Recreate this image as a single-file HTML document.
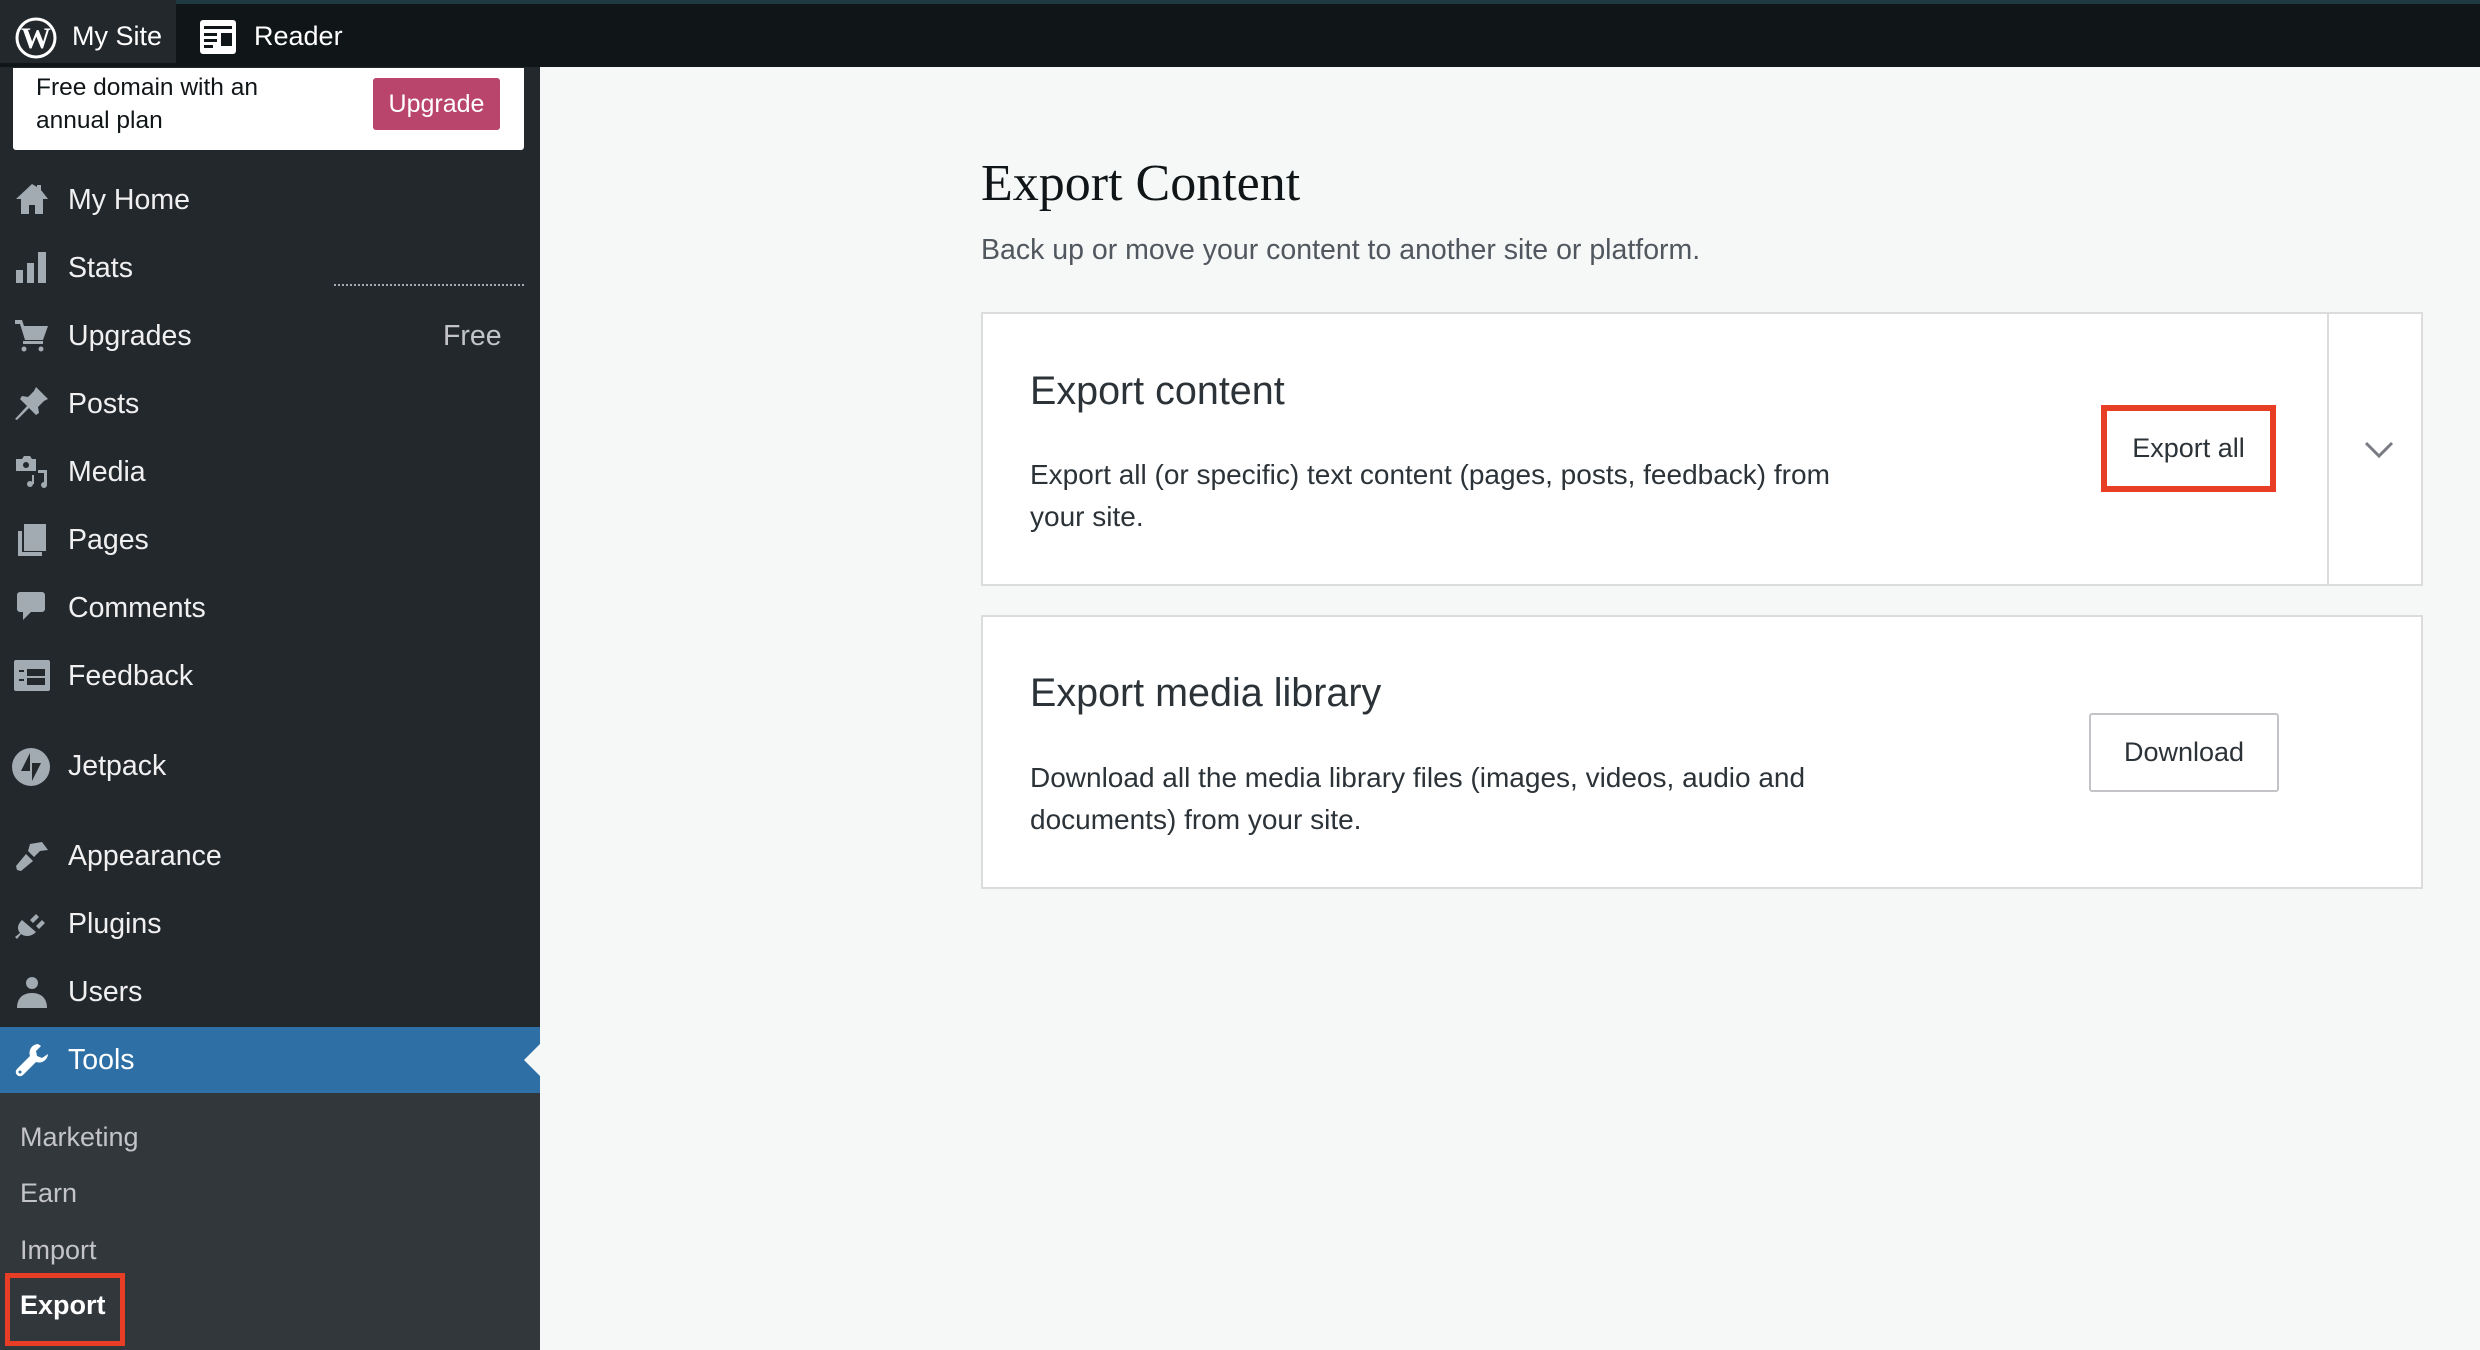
<!DOCTYPE html>
<html><head><meta charset="utf-8"><style>
*{margin:0;padding:0;box-sizing:border-box}
body{width:2480px;height:1350px;overflow:hidden;background:#f6f7f7;font-family:"Liberation Sans",sans-serif;position:relative}
.a{position:absolute}
#top{left:0;top:0;width:2480px;height:67px;background:#101517;border-top:4px solid #1c3a3f}
#mysite{left:0;top:0;width:176px;height:63px;background:#23282d}
.tt{color:#fff;font-size:27px;top:21px}
#side{left:0;top:67px;width:540px;height:1283px;background:#23282d}
#sub{left:0;top:1093px;width:540px;height:257px;background:#32373c}
.mi{position:absolute;left:68px;color:#f0f0f1;font-size:28.5px;line-height:34px}
.ic{position:absolute;left:14px;width:36px;height:36px}
.si{position:absolute;left:20px;color:#c3c4c7;font-size:27px;line-height:30px}
.card{position:absolute;left:981px;width:1442px;background:#fff;border:2px solid #dcdcde}
.ct{position:absolute;left:47px;font-size:39.5px;color:#2c3338}
.cd{position:absolute;left:47px;font-size:28px;color:#2c3338;line-height:42px;width:850px}
.btn{position:absolute;background:#fff;border:2px solid #c3c4c7;border-radius:3px;font-size:27px;color:#2c3338;display:flex;align-items:center;justify-content:center}
</style></head><body>
<div class="a" id="top"></div>
<div class="a" id="mysite"></div>
<svg class="a" style="left:15px;top:17px" width="42" height="42" viewBox="0 0 42 42"><circle cx="21" cy="21" r="19" fill="none" stroke="#fff" stroke-width="3"/><text x="21" y="31" text-anchor="middle" font-family="Liberation Serif" font-size="30" font-weight="bold" fill="#fff">W</text></svg>
<div class="a tt" style="left:72px">My Site</div>
<svg class="a" style="left:200px;top:20px" width="36" height="36" viewBox="0 0 36 36"><rect x="0" y="0" width="36" height="34" rx="3" fill="#fff"/><rect x="4" y="6" width="28" height="3" fill="#101517"/><rect x="4" y="13" width="13" height="3" fill="#101517"/><rect x="4" y="19" width="13" height="3" fill="#101517"/><rect x="4" y="25" width="9" height="3" fill="#101517"/><rect x="21" y="13" width="11" height="13" fill="#101517"/></svg>
<div class="a tt" style="left:254px">Reader</div>

<div class="a" id="side"></div>
<div class="a" id="sub"></div>
<div class="a" style="left:13px;top:68px;width:511px;height:82px;background:#fff;border-radius:0 0 3px 3px"></div>
<div class="a" style="left:36px;top:71px;font-size:24.5px;line-height:33px;color:#101517">Free domain with an<br>annual plan</div>
<div class="a" style="left:373px;top:78px;width:127px;height:52px;background:#b9456d;border-radius:3px;color:#fff;font-size:25px;display:flex;align-items:center;justify-content:center">Upgrade</div>

<div class="mi" style="top:183px">My Home</div>
<svg class="ic" style="top:181px" viewBox="0 0 36 36"><path d="M18 3L2 18h5v15h8v-9h6v9h8V18h5L27 9V4h-4v2z" fill="#a2aab2"/></svg>
<div class="mi" style="top:251px">Stats</div>
<svg class="ic" style="top:249px" viewBox="0 0 36 36"><rect x="2" y="21" width="7" height="13" fill="#a2aab2"/><rect x="13" y="14" width="7" height="20" fill="#a2aab2"/><rect x="24" y="3" width="8" height="31" fill="#a2aab2"/></svg>
<div class="a" style="left:334px;top:284px;width:190px;border-top:2px dotted #a2aab2"></div>
<div class="mi" style="top:319px">Upgrades</div>
<div class="mi" style="top:319px;left:443px;color:#c3c4c7">Free</div>
<svg class="ic" style="top:317px" viewBox="0 0 36 36"><path d="M1 3h7l2 6h24l-5 14H11L6 7H1z" fill="#a2aab2"/><rect x="9" y="24" width="20" height="3" fill="#a2aab2"/><circle cx="10" cy="32" r="2.5" fill="#a2aab2"/><circle cx="27" cy="32" r="2.5" fill="#a2aab2"/></svg>
<div class="mi" style="top:387px">Posts</div>
<svg class="ic" style="top:385px" viewBox="0 0 36 36"><path d="M22 2l12 12-4 2-6 6 1 6-3 2-7-7-12 12-2-1 12-13-7-7 2-3 6 1 6-6z" fill="#a2aab2"/></svg>
<div class="mi" style="top:455px">Media</div>
<svg class="ic" style="top:453px" viewBox="0 0 36 36"><path d="M2 6h6l2-3h6l2 3h4v12H2z" fill="#a2aab2"/><circle cx="12" cy="12" r="3" fill="#23282d"/><path d="M24 17h9v15a3 3 0 1 1-3-3v-9h-6z" fill="#a2aab2"/><circle cx="16" cy="31" r="3" fill="#a2aab2"/><rect x="18" y="22" width="2" height="9" fill="#a2aab2"/></svg>
<div class="mi" style="top:523px">Pages</div>
<svg class="ic" style="top:521px" viewBox="0 0 36 36"><path d="M4 10h4v21h20v4H4z" fill="#a2aab2"/><rect x="10" y="3" width="22" height="27" fill="#a2aab2"/></svg>
<div class="mi" style="top:591px">Comments</div>
<svg class="ic" style="top:589px" viewBox="0 0 36 36"><path d="M6 3h22a3 3 0 0 1 3 3v14a3 3 0 0 1-3 3H17l-8 8v-8H6a3 3 0 0 1-3-3V6a3 3 0 0 1 3-3z" fill="#a2aab2"/></svg>
<div class="mi" style="top:659px">Feedback</div>
<svg class="ic" style="top:657px" viewBox="0 0 36 36"><rect x="0" y="3" width="36" height="31" rx="2" fill="#a2aab2"/><rect x="5" y="13" width="5" height="2" fill="#23282d"/><rect x="5" y="22" width="5" height="2" fill="#23282d"/><rect x="13" y="12" width="18" height="7" fill="#23282d"/><rect x="13" y="21" width="18" height="7" fill="#23282d"/></svg>
<div class="mi" style="top:749px">Jetpack</div>
<svg class="ic" style="top:747px;left:11px;width:40px;height:40px" viewBox="0 0 40 40"><circle cx="20" cy="20" r="19" fill="#a2aab2"/><path d="M19 6v18h-9zM21 34V16h9z" fill="#23282d"/></svg>
<div class="mi" style="top:839px">Appearance</div>
<svg class="ic" style="top:838px" viewBox="0 0 36 36"><path d="M16 6l12-2 6 8-8 1-6 6-6-6z" fill="#a2aab2"/><path d="M12 16l7 7-12 10-4-1-1-4z" fill="#a2aab2"/></svg>
<div class="mi" style="top:907px">Plugins</div>
<svg class="ic" style="top:906px" viewBox="0 0 36 36"><path d="M8 14l14 12c-5 5-11 5-15 2l-4 5-2-2 5-4c-3-4-3-8 2-13z" fill="#a2aab2"/><path d="M16 14l6-6 3 3-6 6zM22 20l6-6 3 3-6 6z" fill="#a2aab2"/></svg>
<div class="mi" style="top:975px">Users</div>
<svg class="ic" style="top:974px" viewBox="0 0 36 36"><circle cx="18" cy="9" r="6" fill="#a2aab2"/><path d="M3 34c0-10 6-15 15-15s15 5 15 15z" fill="#a2aab2"/></svg>
<div class="a" style="left:0;top:1027px;width:540px;height:66px;background:#2e70a6"></div>
<div class="a" style="left:524px;top:1044px;width:0;height:0;border-top:16px solid transparent;border-bottom:16px solid transparent;border-right:16px solid #f6f7f7"></div>
<div class="mi" style="top:1043px;color:#fff">Tools</div>
<svg class="ic" style="top:1042px" viewBox="0 0 36 36"><path d="M24 2a9 9 0 0 0-8 12L3 27a3 3 0 0 0 6 6l13-13a9 9 0 0 0 12-8l-6 4-5-2-1-5 5-5z" fill="#fff"/><circle cx="6" cy="30" r="1.5" fill="#2e70a6"/></svg>
<div class="si" style="top:1122px">Marketing</div>
<div class="si" style="top:1178px">Earn</div>
<div class="si" style="top:1235px">Import</div>
<div class="a" style="left:5px;top:1273px;width:120px;height:73px;border:5px solid #e83e26"></div>
<div class="si" style="top:1290px;color:#fff;font-weight:bold">Export</div>

<div class="a" style="left:981px;top:154px;font-family:'Liberation Serif',serif;font-size:52px;color:#101517">Export Content</div>
<div class="a" style="left:981px;top:234px;font-size:28.5px;color:#50575e">Back up or move your content to another site or platform.</div>

<div class="card" style="top:312px;height:274px">
<div class="a" style="left:1344px;top:0;width:2px;height:270px;background:#dcdcde"></div>
<div class="ct" style="top:55px">Export content</div>
<div class="cd" style="top:140px">Export all (or specific) text content (pages, posts, feedback) from your site.</div>
<div class="btn" style="left:1118px;top:91px;width:175px;height:87px;border:6px solid #e83e26;border-radius:0">Export all</div>
<svg class="a" style="left:1380px;top:126px" width="32" height="20" viewBox="0 0 32 20"><path d="M3 3l13 13L29 3" fill="none" stroke="#787c82" stroke-width="3"/></svg>
</div>
<div class="card" style="top:615px;height:274px">
<div class="ct" style="top:54px">Export media library</div>
<div class="cd" style="top:140px">Download all the media library files (images, videos, audio and documents) from your site.</div>
<div class="btn" style="left:1106px;top:96px;width:190px;height:79px">Download</div>
</div>
</body></html>
